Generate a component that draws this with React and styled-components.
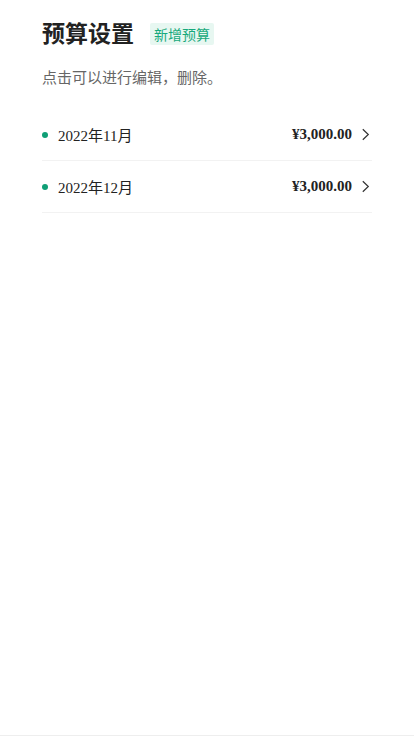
import React from "react";
import styled, { createGlobalStyle } from "styled-components";

const Global = createGlobalStyle`
  html, body { margin: 0; padding: 0; background: #fff; }
  body { font-family: "Noto Sans", "Noto Sans CJK SC", sans-serif; }
  * { box-sizing: border-box; }
`;

const Page = styled.div`
  min-height: 100vh;
  padding: 15px 42px 0;
  border-bottom: 1px solid #eeeeee;
`;

const Header = styled.div`
  display: flex;
  align-items: center;
  height: 34px;
`;

const Title = styled.h1`
  margin: 0;
  font-size: 23px;
  line-height: 34px;
  font-weight: 700;
  color: #222;
  font-family: "Noto Sans CJK SC", sans-serif;
`;

const Badge = styled.button`
  margin: 4px 0 0 16px;
  height: 22px;
  padding: 0 4px;
  border: none;
  border-radius: 2px;
  background: #e7f7f1;
  color: #17a97c;
  font-size: 14px;
  line-height: 22px;
  font-family: "Noto Sans CJK SC", sans-serif;
  cursor: pointer;
`;

const Hint = styled.p`
  margin: 17px 0 0;
  font-size: 15px;
  line-height: 22px;
  color: #666;
  font-family: "Noto Sans CJK SC", sans-serif;
`;

const List = styled.ul`
  list-style: none;
  margin: 21px 0 0;
  padding: 0;
`;

const Row = styled.li`
  display: flex;
  align-items: center;
  height: 52px;
  border-bottom: 1px solid #f2f2f2;
`;

const Dot = styled.span`
  width: 6px;
  height: 6px;
  border-radius: 50%;
  background: #0f9f76;
  margin: 0 10px 0 0;
  flex: none;
`;

const Month = styled.span`
  flex: 1;
  font-family: "Liberation Serif", "Noto Sans CJK SC", serif;
  font-size: 15px;
  color: #222;
`;

const Amount = styled.span`
  font-family: "Liberation Serif", "Noto Sans CJK SC", serif;
  font-size: 15px;
  font-weight: 700;
  color: #222;
`;

const Chevron = styled.svg`
  width: 12px;
  height: 13px;
  margin-left: 8px;
  flex: none;
`;

const items = [
  { month: "2022年11月", amount: "¥3,000.00" },
  { month: "2022年12月", amount: "¥3,000.00" },
];

export default function App() {
  return (
    <>
      <Global />
      <Page>
        <Header>
          <Title>预算设置</Title>
          <Badge>新增预算</Badge>
        </Header>
        <Hint>点击可以进行编辑，删除。</Hint>
        <List>
          {items.map((it) => (
            <Row key={it.month}>
              <Dot />
              <Month>{it.month}</Month>
              <Amount>{it.amount}</Amount>
              <Chevron viewBox="0 0 12 13">
                <path d="M2.8 1.2 L8.3 6.5 L2.8 11.8" fill="none" stroke="#333" strokeWidth="1.2" />
              </Chevron>
            </Row>
          ))}
        </List>
      </Page>
    </>
  );
}
